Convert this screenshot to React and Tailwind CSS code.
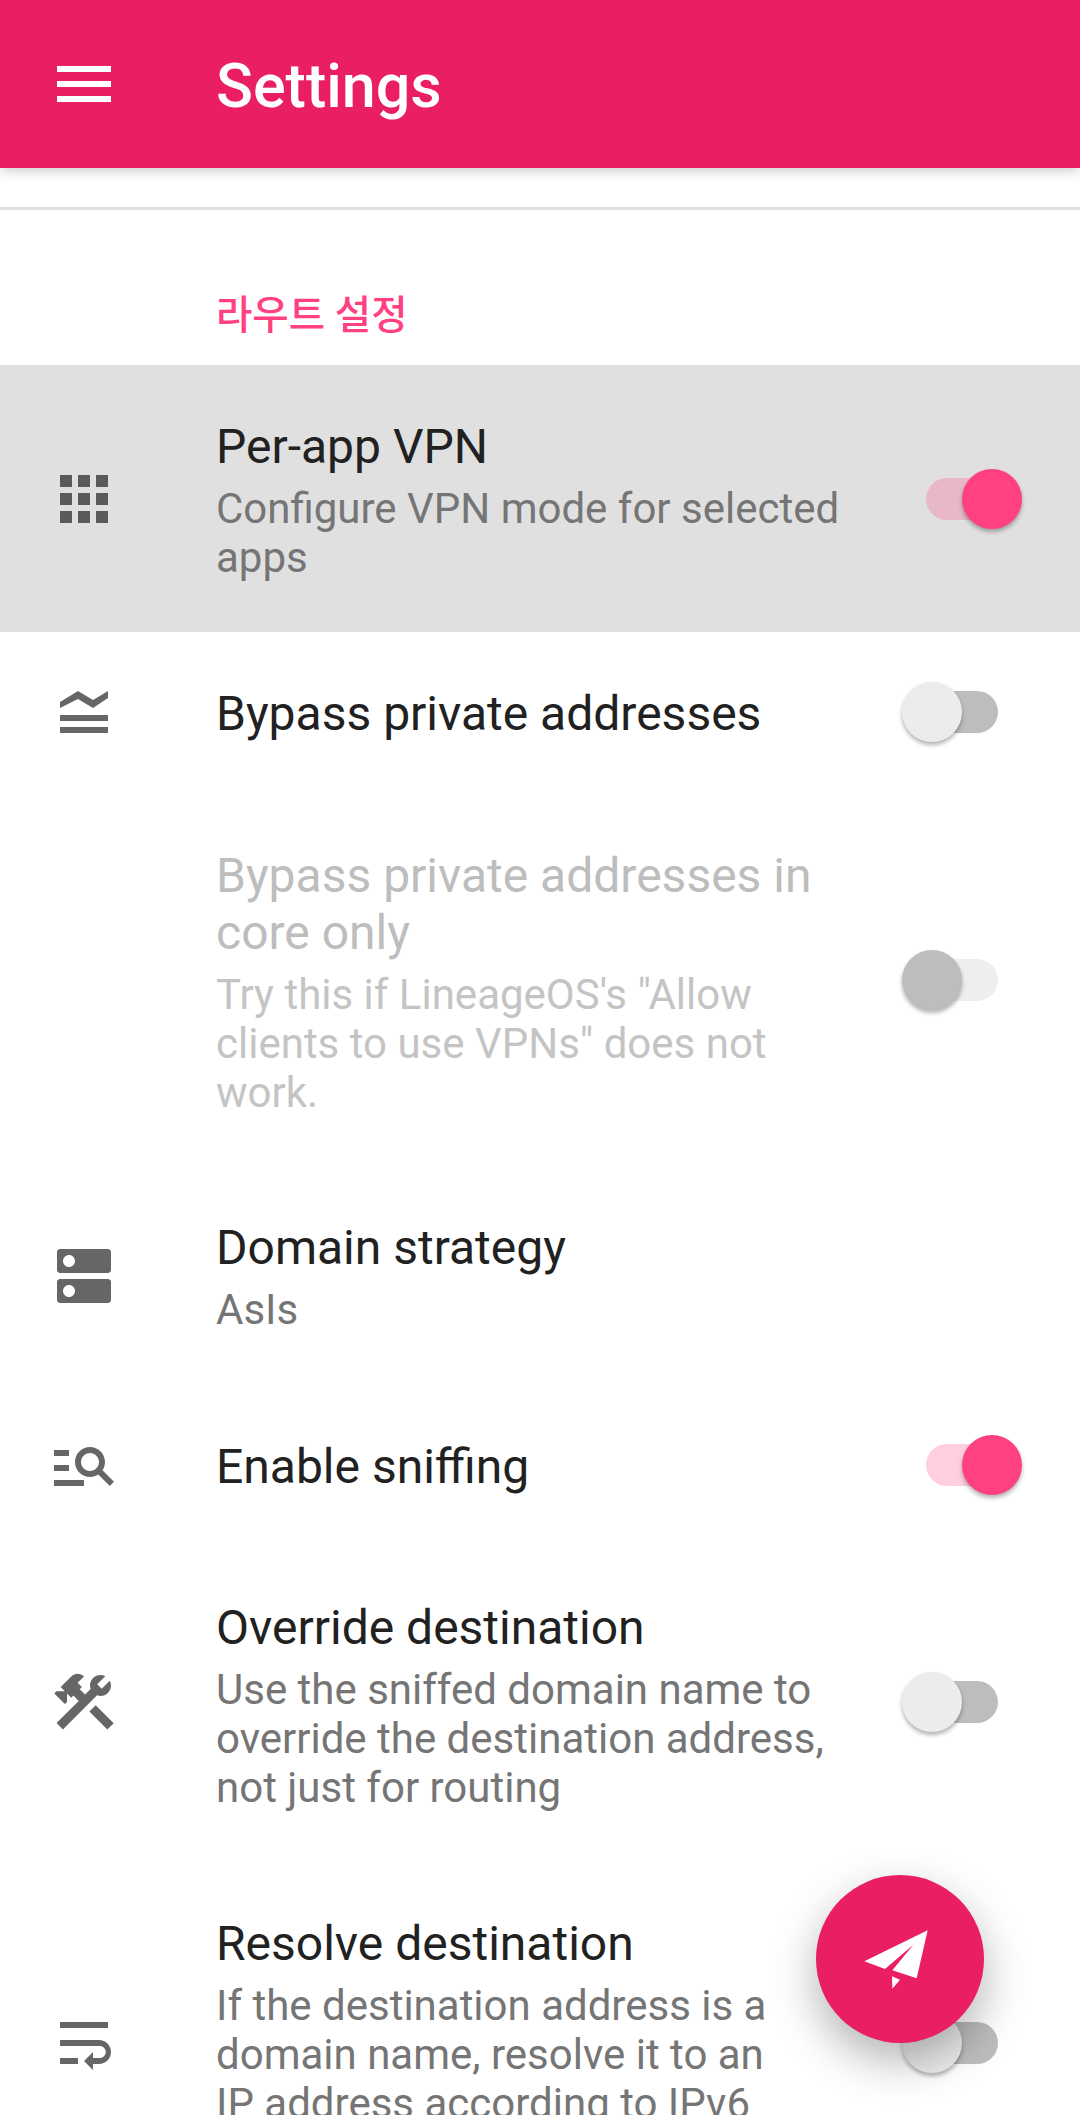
const ICON_PATHS = {
  apps: 'M4 8h4V4H4v4zm6 12h4v-4h-4v4zm-6 0h4v-4H4v4zm0-6h4v-4H4v4zm6 0h4v-4h-4v4zm6-10v4h4V4h-4zm-6 4h4V4h-4v4zm6 6h4v-4h-4v4zm0 6h4v-4h-4v4z',
  bypass: 'M4 8.67 10 5l5 3 5-3v2.33L15 10.67l-5-3-6 3zM4 13h16v2H4zM4 17h16v2H4z',
  dns: 'M20 13H4c-.55 0-1 .45-1 1v6c0 .55.45 1 1 1h16c.55 0 1-.45 1-1v-6c0-.55-.45-1-1-1zM7 19c-1.1 0-2-.9-2-2s.9-2 2-2 2 .9 2 2-.9 2-2 2zM20 3H4c-.55 0-1 .45-1 1v6c0 .55.45 1 1 1h16c.55 0 1-.45 1-1V4c0-.55-.45-1-1-1zM7 9c-1.1 0-2-.9-2-2s.9-2 2-2 2 .9 2 2-.9 2-2 2z',
  sniff: 'M7 9H2V7h5v2zm0 3H2v2h5v-2zm13.59 7l-3.83-3.83c-.8.52-1.74.83-2.76.83-2.76 0-5-2.24-5-5s2.24-5 5-5 5 2.24 5 5c0 1.02-.31 1.96-.83 2.75L22 17.59 20.59 19zM17 11c0-1.65-1.35-3-3-3s-3 1.35-3 3 1.35 3 3 3 3-1.35 3-3zM2 19h10v-2H2v2z',
  tools: 'M13.783 15.172l2.121-2.121 5.996 5.996-2.121 2.121zM17.5 10c1.93 0 3.5-1.57 3.5-3.5 0-.58-.16-1.12-.41-1.6l-2.7 2.7-1.49-1.49 2.7-2.7c-.48-.25-1.02-.41-1.6-.41C15.57 3 14 4.57 14 6.5c0 .41.08.8.21 1.16l-1.85 1.85-1.78-1.78.71-.71-1.41-1.41L12 3.49c-1.17-1.17-3.07-1.17-4.24 0L4.22 7.03l1.41 1.41H2.81l-.71.71 3.54 3.54.71-.71V9.15l1.41 1.41.71-.71 1.78 1.78-7.41 7.41 2.12 2.12L16.34 9.79c.36.13.75.21 1.16.21z',
  wrap: 'M4 19h6v-2H4v2zM20 5H4v2h16V5zm-3 6H4v2h13.25c1.1 0 2 .9 2 2s-.9 2-2 2H15v-2l-3 3 3 3v-2h2c2.21 0 4-1.79 4-4s-1.79-4-4-4z',
};

function Icon({ name }) {
  return (
    <svg viewBox="0 0 24 24" className="w-[72px] h-[72px] fill-black/60">
      <path d={ICON_PATHS[name]} />
    </svg>
  );
}

function Switch({ on, disabled }) {
  const track = disabled ? 'bg-[#eeeeee]' : on ? 'bg-[#ff4081]/25' : 'bg-[#bdbdbd]';
  const thumb = disabled ? 'bg-[#bdbdbd]' : on ? 'bg-[#ff4081]' : 'bg-[#ececec]';
  return (
    <div className="relative w-[120px] h-[60px] shrink-0 flex items-center justify-center">
      <div className={`w-[72px] h-[42px] rounded-full ${track}`} />
      <div
        className={`absolute top-0 w-[60px] h-[60px] rounded-full shadow-[0_3px_4px_rgba(0,0,0,0.3)] ${thumb} ${on ? 'right-0' : 'left-0'}`}
      />
    </div>
  );
}

function Row({ icon, title, summary, toggle, disabled, active, className, textClass = '' }) {
  return (
    <div className={`flex items-center pl-[48px] pr-[58px] ${active ? 'bg-[#e0e0e0]' : ''} ${className}`}>
      <div className="w-[72px] h-[72px] shrink-0 mr-[96px]">{icon && <Icon name={icon} />}</div>
      <div className={`flex-1 min-w-0 pr-[46px] ${textClass}`}>
        <div className={`text-[48px] leading-[57px] ${disabled ? 'text-[#bdbdbd]' : 'text-[#212121]'}`}>{title}</div>
        {summary && (
          <div className={`mt-[9px] text-[42px] leading-[49px] ${disabled ? 'text-[#c4c4c4]' : 'text-[#757575]'}`}>{summary}</div>
        )}
      </div>
      {toggle && <Switch on={toggle === 'on'} disabled={disabled} />}
    </div>
  );
}

export default function App() {
  return (
    <div className="relative h-[2115px] overflow-hidden bg-white font-[Roboto,'Noto_Sans_CJK_KR',sans-serif]">
      <header className="relative z-10 h-[168px] flex items-center bg-[#e91e63] shadow-[0_3px_12px_rgba(0,0,0,0.2)]">
        <div className="ml-[57px] mr-[105px] w-[54px] flex flex-col gap-[9px]">
          <div className="h-[6px] bg-white" />
          <div className="h-[6px] bg-white" />
          <div className="h-[6px] bg-white" />
        </div>
        <h1 className="pt-[6px] text-[61px] font-medium text-white">Settings</h1>
      </header>
      <div className="h-[39px]" />
      <div className="h-[3px] bg-[#e0e0e0]" />

      <div className="h-[155px] pl-[216px] pt-[81px] text-[39.5px] leading-[49px] font-medium text-[#ff4081]">라우트 설정</div>

      <Row
        active
        icon="apps"
        title="Per-app VPN"
        summary="Configure VPN mode for selected apps"
        toggle="on"
        textClass="pt-[3px]"
        className="h-[267px]"
      />
      <Row icon="bypass" title="Bypass private addresses" toggle="off" textClass="pt-[3px]" className="h-[160px]" />
      <Row
        disabled
        title="Bypass private addresses in core only"
        summary={`Try this if LineageOS's "Allow clients to use VPNs" does not work.`}
        toggle="off"
        textClass="pt-[4px]"
        className="h-[375px]"
      />
      <Row icon="dns" title="Domain strategy" summary="AsIs" className="h-[218px]" />
      <Row icon="sniff" title="Enable sniffing" toggle="on" textClass="pt-[2px]" className="h-[160px]" />
      <Row
        icon="tools"
        title="Override destination"
        summary="Use the sniffed domain name to override the destination address, not just for routing"
        toggle="off"
        textClass="pt-[7px]"
        className="h-[313px]"
      />
      <Row
        icon="wrap"
        title="Resolve destination"
        summary={'If the destination address is a domain name, resolve it to an IP\u00a0address according to IPv6'}
        toggle="off"
        textClass="self-start pt-[57px]"
        className="h-[370px]"
      />

      <button className="absolute left-[816px] top-[1875px] w-[168px] h-[168px] rounded-full bg-[#e91e63] flex items-center justify-center shadow-[0_18px_45px_rgba(0,0,0,0.3)]">
        <svg viewBox="252 248 216 216" className="w-[72px] h-[72px] fill-white">
          <path d="M253 363 443 270 410 414 337 390 400 313 315 386zM336 408 360 418 337 445z" />
        </svg>
      </button>
    </div>
  );
}
